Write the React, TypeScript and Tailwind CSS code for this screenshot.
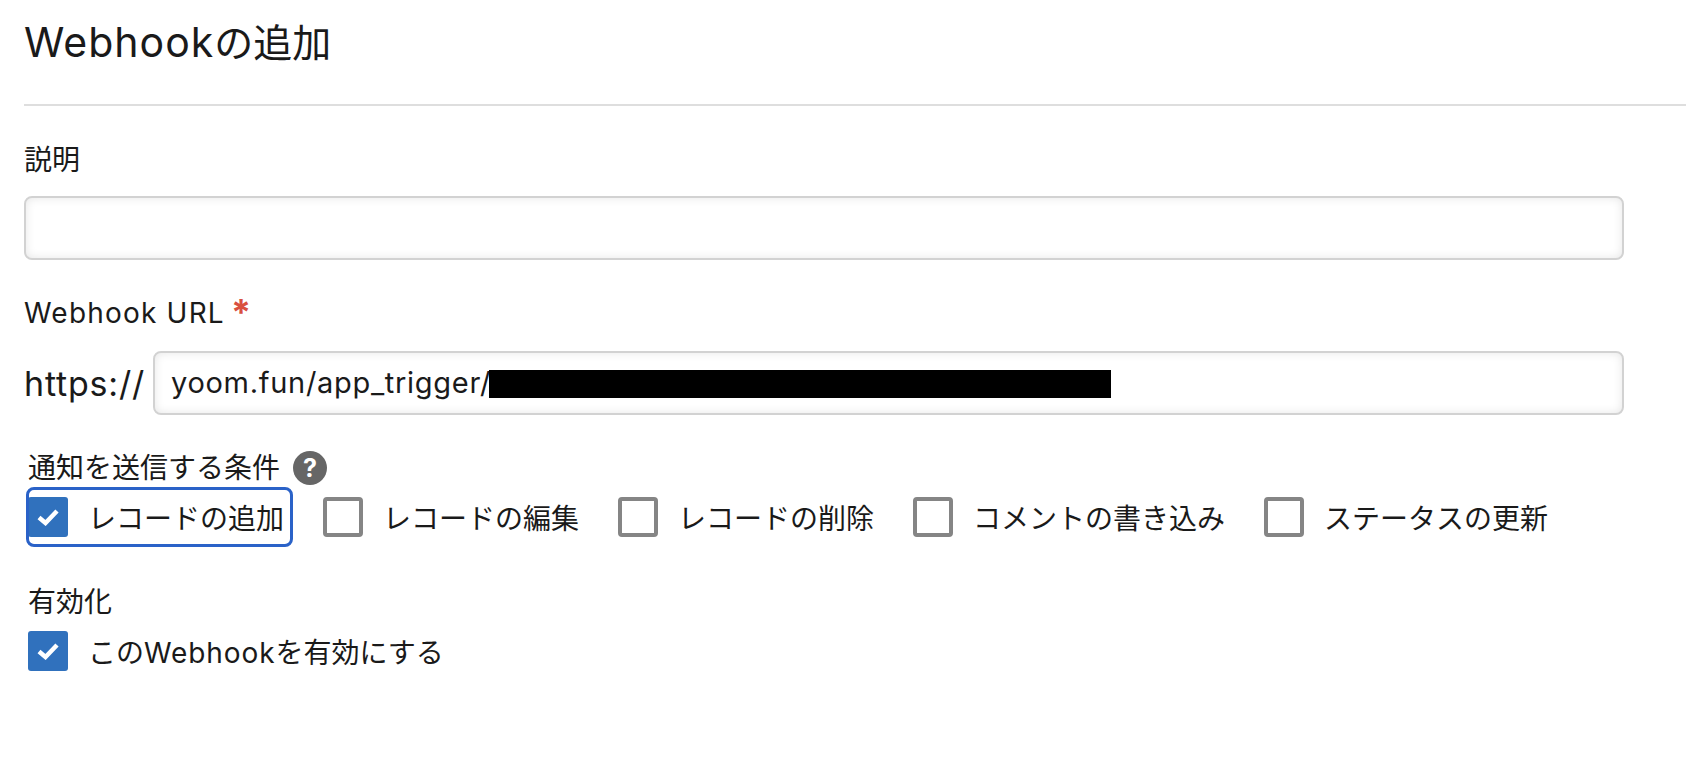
const jp = "font-['Inter','Noto_Sans_CJK_JP',sans-serif]";

const triggers = [
  { label: 'レコードの追加', checked: true },
  { label: 'レコードの編集', checked: false },
  { label: 'レコードの削除', checked: false },
  { label: 'コメントの書き込み', checked: false },
  { label: 'ステータスの更新', checked: false },
];

function Box({ checked }: { checked: boolean }) {
  if (!checked) {
    return <span className="w-10 h-10 rounded-[4px] border-4 border-[#858585] bg-white shrink-0"></span>;
  }
  return (
    <span className="w-10 h-10 rounded-[3px] bg-[#3071bd] shrink-0 flex items-center justify-center">
      <svg width="22" height="18" viewBox="0 0 22 18" fill="none">
        <path d="M2 9.5l6.5 5.5L20 3" stroke="white" strokeWidth="4.5" />
      </svg>
    </span>
  );
}

export default function App() {
  return (
    <div className={`min-h-screen bg-white text-[#1a1a1a] pl-6 ${jp}`}>
      {/* Header */}
      <div className="h-[106px] border-b-2 border-[#dedede] pt-[17px]">
        <h1 className="text-[39px] leading-[50px] font-normal">
          <span className="text-[41px] tracking-[1px]">Webhook</span>の追加
        </h1>
      </div>

      <div className="w-[1600px]">
        <div className="mt-[34px] text-[28px] leading-[40px]">説明</div>
        <input className="mt-[16px] block w-full h-[64px] rounded-lg border-2 border-[#d2d2d2] shadow-[inset_0_0_10px_rgba(0,0,0,0.1)]" />

        <div className="mt-[33px] flex text-[28px] leading-[40px] tracking-[1.2px]">
          Webhook URL
          <span className="ml-[6px] -mt-[1px] text-[36px] font-bold text-[#d9503f]">*</span>
        </div>
        <div className="mt-[18px] flex items-center">
          <span className="w-[129px] shrink-0 text-[34px] tracking-[0.8px]">https://</span>
          <div className="relative flex-1 h-[64px] rounded-lg border-2 border-[#d2d2d2] shadow-[inset_0_0_10px_rgba(0,0,0,0.1)] pl-[16px] flex items-center text-[29px] tracking-[0.7px]">
            yoom.fun/app_trigger/
            <div className="absolute left-[334px] top-[17px] w-[622px] h-[28px] bg-black"></div>
          </div>
        </div>

        <div className="mt-[33px] ml-1 flex items-center gap-[13px] text-[28px] leading-[40px]">
          通知を送信する条件
          <span className="w-[34px] h-[34px] rounded-full bg-[#666666] text-white text-[25px] font-bold flex items-center justify-center">?</span>
        </div>
        <div className="mt-[9px] ml-1 flex items-center gap-[39px]">
          {triggers.map((t) => (
            <label key={t.label} className="relative flex items-center gap-5 h-10 text-[28px]">
              <Box checked={t.checked} />
              <span className="pt-[4px]">{t.label}</span>
              {t.checked && (
                <span className="absolute -left-[2px] -top-[10px] w-[267px] h-[60px] rounded-lg border-[3px] border-[#2a62c8]"></span>
              )}
            </label>
          ))}
        </div>

        <div className="mt-[45px] ml-1 text-[28px] leading-[40px]">有効化</div>
        <label className="ml-1 mt-[9px] flex items-center gap-5 h-10 text-[28px]">
          <Box checked />
          <span className="pt-[4px]">
            この<span className="tracking-[0.9px]">Webhook</span>を有効にする
          </span>
        </label>
      </div>
    </div>
  );
}
